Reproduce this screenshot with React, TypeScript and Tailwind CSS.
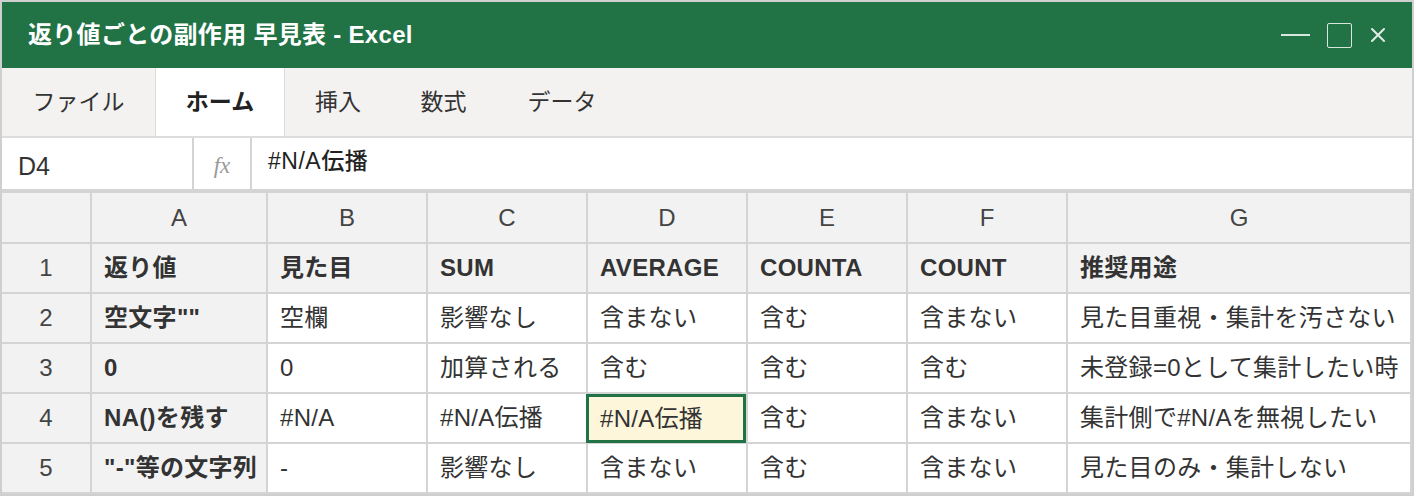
import React from "react"
import clsx from "clsx"

const FONT = { fontFamily: '"Liberation Sans", "Noto Sans CJK JP", sans-serif' }

const tabs = [
  { label: "ファイル", w: "w-[153px]" },
  { label: "ホーム", w: "w-[130px]", active: true },
  { label: "挿入", w: "w-[106px]" },
  { label: "数式", w: "w-[105px]" },
  { label: "データ", w: "w-[132px]" },
]

const cols = ["A", "B", "C", "D", "E", "F", "G"]

const rows: string[][] = [
  ["返り値", "見た目", "SUM", "AVERAGE", "COUNTA", "COUNT", "推奨用途"],
  ["空文字\"\"", "空欄", "影響なし", "含まない", "含む", "含まない", "見た目重視・集計を汚さない"],
  ["0", "0", "加算される", "含む", "含む", "含む", "未登録=0として集計したい時"],
  ["NA()を残す", "#N/A", "#N/A伝播", "#N/A伝播", "含む", "含まない", "集計側で#N/Aを無視したい"],
  ["\"-\"等の文字列", "-", "影響なし", "含まない", "含む", "含まない", "見た目のみ・集計しない"],
]

const App = () => {
  return (
    <div className="w-[1416px] h-[496px] bg-white" style={FONT}>
      <div className="w-[1414px] h-[496px] border-2 border-[#cfcfcf] flex flex-col text-[#333]">
        {/* title bar */}
        <div className="h-[66px] shrink-0 bg-[#217346] flex items-center pl-[26px] pr-[26px]">
          <div className="text-white text-[24px] font-semibold tracking-[0.3px]">
            返り値ごとの副作用 早見表 - Excel
          </div>
          <div className="ml-auto flex items-center">
            <div className="w-[29px] h-[2px] bg-[#d9e6de]" />
            <div className="ml-[17px] w-[25px] h-[25px] border border-[#d9e6de] rounded-[2px]" />
            <svg className="ml-[18px]" width="16" height="16" viewBox="0 0 16 16">
              <path d="M2 2 L14 14 M14 2 L2 14" stroke="#e4ece7" strokeWidth="2" strokeLinecap="round" />
            </svg>
          </div>
        </div>

        {/* tabs */}
        <div className="h-[70px] shrink-0 bg-[#f3f2f1] border-b-2 border-[#dcdcdc] flex">
          {tabs.map((t) => (
            <div
              key={t.label}
              className={clsx(
                "flex items-center justify-center text-[23px] h-full",
                t.w,
                t.active && "bg-white border-x border-[#dcdcdc] font-bold text-[#222]"
              )}
            >
              {t.label}
            </div>
          ))}
        </div>

        {/* formula bar */}
        <div className="h-[53px] shrink-0 bg-white border-b-2 border-[#d4d4d4] flex">
          <div className="w-[192px] border-r-2 border-[#d4d4d4] flex items-center pl-[16px] pt-[6px] text-[25px]">
            D4
          </div>
          <div
            className="w-[58px] border-r-2 border-[#d4d4d4] flex items-center justify-center pt-[6px] text-[23px] italic text-[#999]"
            style={{ fontFamily: '"Liberation Serif", serif' }}
          >
            fx
          </div>
          <div className="flex items-center pl-[16px] pb-[4px] text-[23px] font-medium text-[#222] tracking-[0.5px]">
            #N/A伝播
          </div>
        </div>

        {/* grid */}
        <div className="flex-1 bg-[#d4d4d4] pt-[2px] pr-[2px] pb-[2px] grid grid-cols-[88px_174px_158px_158px_158px_158px_158px_342px] grid-rows-[49px_48px_48px_48px_48px_48px] gap-[2px]">
          <div className="bg-[#f2f2f2]" />
          {cols.map((c) => (
            <div key={c} className="bg-[#f2f2f2] flex items-center justify-center text-[24px] text-[#444]">
              {c}
            </div>
          ))}
          {rows.map((r, ri) => (
            <React.Fragment key={ri}>
              <div className="bg-[#f2f2f2] flex items-center justify-center text-[24px] text-[#444]">
                {ri + 1}
              </div>
              {r.map((cell, ci) => {
                const selected = ri === 3 && ci === 3
                const head = ri === 0 || ci === 0
                return (
                  <div
                    key={ci}
                    className={clsx(
                      "flex items-center text-[24px] whitespace-nowrap overflow-hidden tracking-[0.3px]",
                      selected
                        ? "bg-[#fef6da] border-[3px] border-[#217346] -ml-[2px] -mb-[1px] pl-[11px]"
                        : head
                          ? "bg-[#f2f2f2] font-semibold px-3"
                          : "bg-white px-3"
                    )}
                  >
                    {cell}
                  </div>
                )
              })}
            </React.Fragment>
          ))}
        </div>
      </div>
    </div>
  )
}

export default App
